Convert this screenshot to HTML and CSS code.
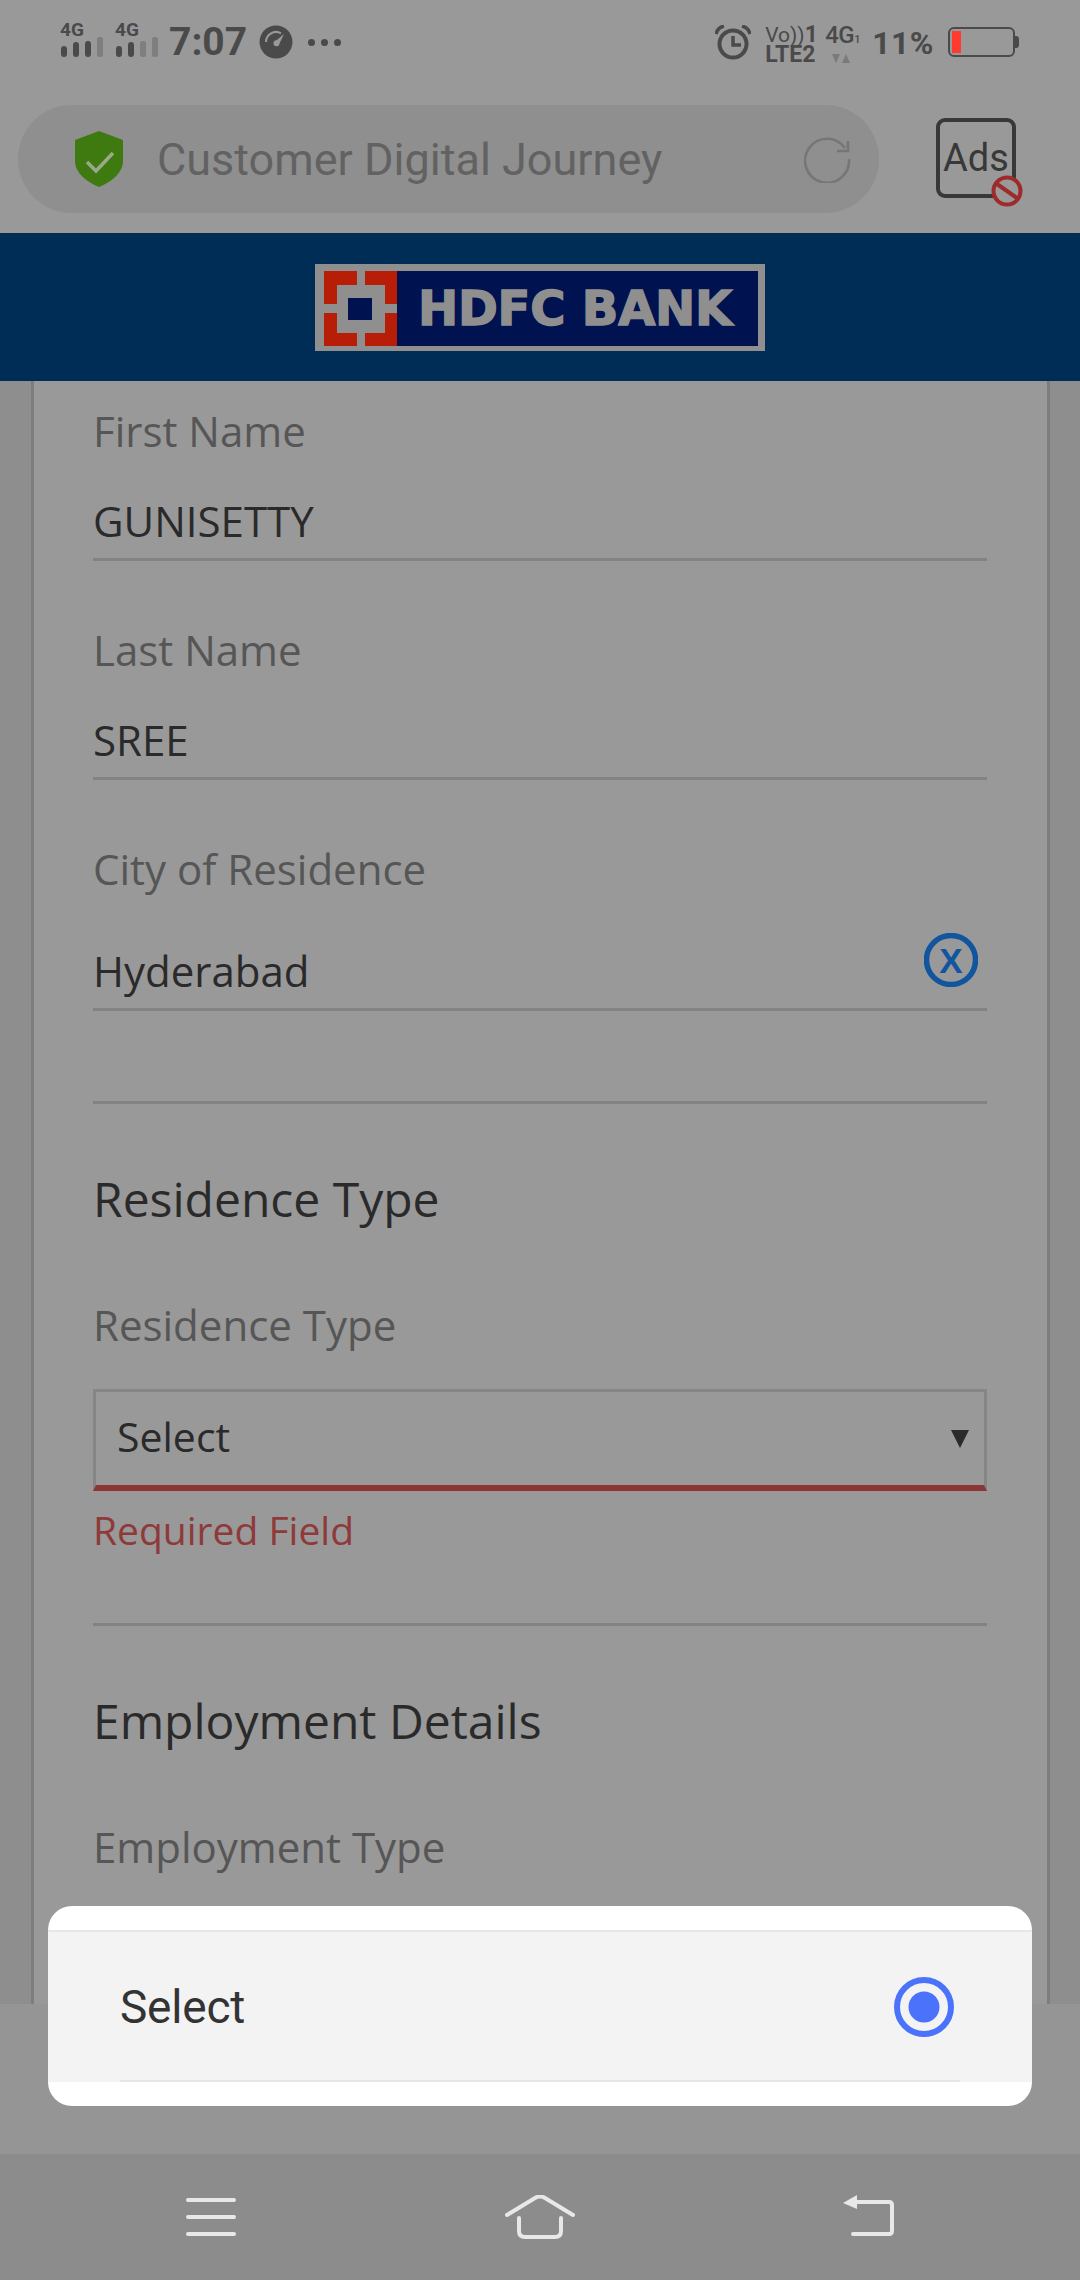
FILE: index.html
```html
<!DOCTYPE html>
<html lang="en">
<head>
    <meta charset="UTF-8">
    <meta name="viewport" content="width=device-width, initial-scale=1.0">
    <title>Customer Digital Journey</title>
    <link rel="stylesheet" href="styles.css">
</head>
<body>

<div class="status-bar">
    <div class="status-left">
        <div class="signal">
            <span>4G</span>
            <svg width="44" height="20" viewBox="0 0 44 20">
                <rect x="1" y="9" width="6" height="11" rx="3" class="bar-on"/>
                <rect x="13" y="5" width="6" height="15" rx="3" class="bar-on"/>
                <rect x="25" y="4" width="6" height="16" rx="3" class="bar-on"/>
                <rect x="37" y="0" width="6" height="20" rx="2" class="bar-off"/>
            </svg>
        </div>
        <div class="signal signal-two">
            <span>4G</span>
            <svg width="44" height="20" viewBox="0 0 44 20">
                <rect x="1" y="9" width="6" height="11" rx="3" class="bar-on"/>
                <rect x="13" y="5" width="6" height="15" rx="3" class="bar-on"/>
                <rect x="25" y="4" width="6" height="16" rx="2" class="bar-off"/>
                <rect x="37" y="0" width="6" height="20" rx="2" class="bar-off"/>
            </svg>
        </div>
        <span class="clock">7:07</span>
        <svg class="gauge" width="34" height="34" viewBox="0 0 34 34">
            <circle cx="17" cy="17" r="16.5" fill="#4a4a4a"/>
            <path d="M7 17a10 10 0 0 1 15-8.6" fill="none" stroke="#999" stroke-width="2.2"/>
            <path d="M25 9l-7.5 6.2a3 3 0 1 0 3 3.2z" fill="#999"/>
        </svg>
        <div class="dots"><i></i><i></i><i></i></div>
    </div>
    <div class="status-right">
        <svg class="alarm" width="36" height="35" viewBox="0 0 36 35">
            <circle cx="18" cy="19" r="13.5" fill="none" stroke="#4a4a4a" stroke-width="4"/>
            <path d="M18 11v9h8" fill="none" stroke="#4a4a4a" stroke-width="3.5"/>
            <path d="M1 9c1-4 4-7 8-8M35 9c-1-4-4-7-8-8" fill="none" stroke="#4a4a4a" stroke-width="3.5"/>
        </svg>
        <div class="volte">
            <span class="volte-top">Vo))<b>1</b></span>
            <span class="volte-bottom">LTE2</span>
        </div>
        <div class="net">
            <span>4G<small>1</small></span>
            <svg width="18" height="9" viewBox="0 0 18 9">
                <path d="M0 0h8l-4 9zM10 9h8l-4-9z" fill="#7a7a7a"/>
            </svg>
        </div>
        <span class="percent">11%</span>
        <div class="battery"><div class="battery-fill"></div></div>
    </div>
</div>

<div class="toolbar">
    <div class="address-pill">
        <svg class="shield" width="48" height="56" viewBox="0 0 48 56">
            <path d="M24 0l24 9v21c0 12-12 21-24 26C12 51 0 42 0 30V9z" fill="#3f7a10"/>
            <path d="M12 31l9 9 17-18" fill="none" stroke="#9aa98c" stroke-width="3.5"/>
        </svg>
        <span class="address-text">Customer Digital Journey</span>
        <svg class="refresh" width="48" height="48" viewBox="0 0 48 48">
            <path d="M41 13a22 22 0 1 0 4 11" fill="none" stroke="#767676" stroke-width="2.6"/>
            <path d="M44 6v10H33" fill="none" stroke="#767676" stroke-width="2.6"/>
        </svg>
    </div>
    <div class="ads-box">
        <span>Ads</span>
        <svg class="no-sign" width="32" height="32" viewBox="0 0 32 32">
            <circle cx="16" cy="16" r="13.5" fill="#999" stroke="#9e2b2b" stroke-width="4"/>
            <path d="M6 9l20 14" stroke="#9e2b2b" stroke-width="4"/>
        </svg>
    </div>
</div>

<header class="bank-header">
    <div class="logo">
        <svg class="logo-mark" width="73" height="75" viewBox="0 0 73 75">
            <rect width="73" height="75" fill="#b81d08"/>
            <rect x="33" width="8" height="75" fill="#8f8f8f"/>
            <rect y="33" width="73" height="9" fill="#8f8f8f"/>
            <rect x="13" y="14" width="48" height="48" fill="#8f8f8f"/>
            <rect x="24" y="27" width="24" height="22" fill="#00124f"/>
        </svg>
        <span class="logo-text">HDFC BANK</span>
    </div>
</header>

<main class="content">
    <div class="card">
        <div class="field">
            <div class="label">First Name</div>
            <div class="value">GUNISETTY</div>
        </div>
        <div class="field">
            <div class="label">Last Name</div>
            <div class="value">SREE</div>
        </div>
        <div class="field field-city">
            <div class="label">City of Residence</div>
            <div class="value">Hyderabad</div>
            <svg class="clear-icon" width="54" height="54" viewBox="0 0 54 54">
                <circle cx="27" cy="27" r="24.5" fill="none" stroke="#12559f" stroke-width="5.5"/>
                <text x="27" y="39.5" text-anchor="middle" class="clear-x">X</text>
            </svg>
        </div>
        <div class="divider"></div>

        <h2 class="section-title">Residence Type</h2>
        <div class="label label-select">Residence Type</div>
        <div class="select-box">
            <span>Select</span>
            <i class="select-arrow"></i>
        </div>
        <div class="error-text">Required Field</div>
        <div class="divider divider-error"></div>

        <h2 class="section-title">Employment Details</h2>
        <div class="label">Employment Type</div>
    </div>
</main>

<div class="bottom-gap"></div>

<nav class="nav-bar">
    <svg width="50" height="41" viewBox="0 0 50 41">
        <path d="M2 5h46M2 22h46M2 39h46" class="nav-stroke"/>
    </svg>
    <svg width="70" height="44" viewBox="0 0 70 44">
        <path d="M2 20L30 3q5-3 10 0l28 17" class="nav-stroke"/>
        <path d="M14 23v13q0 6 6 6h30q6 0 6-6V23" class="nav-stroke"/>
    </svg>
    <svg width="51" height="41" viewBox="0 0 51 41">
        <path d="M0 8l14-8v14z" fill="#e8e8e8"/>
        <path d="M8 7h38q3 0 3 3v26q0 3-3 3H10" class="nav-stroke"/>
    </svg>
</nav>

<div class="dialog">
    <div class="dialog-row">
        <span>Select</span>
        <svg width="60" height="60" viewBox="0 0 60 60">
            <circle cx="30" cy="30" r="27" fill="none" stroke="#4a72fb" stroke-width="6"/>
            <circle cx="30" cy="30" r="15.5" fill="#4a72fb"/>
        </svg>
    </div>
</div>

</body>
</html>
```

FILE: styles.css
```css
* {
    box-sizing: border-box;
}
body {
    margin: 0;
    width: 1080px;
    height: 2280px;
    overflow: hidden;
    position: relative;
    display: flex;
    flex-direction: column;
    font-family: "Open Sans", sans-serif;
    background-color: #999;
}

/* status bar */
.status-bar {
    height: 100px;
    display: flex;
    justify-content: space-between;
    font-family: Roboto, sans-serif;
    color: #4a4a4a;
}
.status-left {
    display: flex;
    padding: 22px 0 0 60px;
}
.signal {
    width: 44px;
    display: flex;
    flex-direction: column;
    font-size: 19px;
    font-weight: 700;
    line-height: 15px;
}
.signal svg {
    display: block;
}
.signal-two {
    margin-left: 11px;
}
.bar-on {
    fill: #4a4a4a;
}
.bar-off {
    fill: #7f7f7f;
}
.clock {
    margin: 0 0 0 10px;
    font-size: 39px;
    font-weight: 700;
    line-height: 40px;
}
.gauge {
    margin: 3px 0 0 12px;
}
.dots {
    display: flex;
    gap: 6px;
    margin: 17px 0 0 15px;
}
.dots i {
    width: 7px;
    height: 7px;
    border-radius: 50%;
    background-color: #4a4a4a;
}
.status-right {
    display: flex;
    padding: 25px 65px 0 0;
}
.alarm {
    margin-right: 14px;
}
.volte {
    width: 52px;
    display: flex;
    flex-direction: column;
}
.volte-top {
    font-size: 21px;
    line-height: 19px;
    white-space: nowrap;
}
.volte-top b {
    font-size: 23px;
}
.volte-bottom {
    font-size: 23px;
    font-weight: 700;
    line-height: 19px;
}
.net {
    width: 34px;
    margin-left: 8px;
    display: flex;
    flex-direction: column;
    font-size: 24px;
    font-weight: 500;
    line-height: 20px;
    letter-spacing: -0.5px;
    white-space: nowrap;
}
.net small {
    font-size: 11px;
}
.net svg {
    margin: 4px 0 0 7px;
}
.percent {
    margin: 0 0 0 13px;
    font-size: 32px;
    font-weight: 700;
    line-height: 36px;
    letter-spacing: 0.5px;
}
.battery {
    position: relative;
    width: 67px;
    height: 30px;
    margin: 2px 0 0 14px;
    padding: 2px;
    border: 2px solid #4a4a4a;
    border-radius: 6px;
}
.battery::after {
    content: "";
    position: absolute;
    right: -6px;
    top: 7px;
    width: 4px;
    height: 12px;
    border-radius: 0 3px 3px 0;
    background-color: #4a4a4a;
}
.battery-fill {
    width: 9px;
    height: 22px;
    background-color: #ff3b30;
}

/* address bar */
.toolbar {
    height: 133px;
    display: flex;
    padding: 5px 0 0 18px;
}
.address-pill {
    width: 861px;
    height: 108px;
    display: flex;
    align-items: center;
    padding-left: 57px;
    border-radius: 54px;
    background-color: #8f8f8f;
}
.shield {
    flex: none;
}
.address-text {
    flex: 1;
    margin-left: 34px;
    font-family: Roboto, sans-serif;
    font-size: 45px;
    color: #626262;
}
.refresh {
    margin-right: 27px;
}
.ads-box {
    position: relative;
    width: 80px;
    height: 80px;
    margin: 13px 0 0 57px;
    display: flex;
    align-items: center;
    justify-content: center;
    border: 4px solid #383838;
    border-radius: 9px;
    font-family: Roboto, sans-serif;
    font-size: 38px;
    color: #383838;
}
.no-sign {
    position: absolute;
    right: -11px;
    bottom: -13px;
}

/* logo */
.bank-header {
    height: 148px;
    padding-top: 31px;
    background-color: #002d56;
}
.logo {
    width: 450px;
    height: 87px;
    margin-left: 315px;
    display: flex;
    padding: 7px;
    padding-left: 9px;
    background-color: #8f8f8f;
}
.logo-mark {
    flex: none;
}
.logo-text {
    flex: 1;
    height: 75px;
    padding-left: 21px;
    background-color: #00124f;
    font-family: "DejaVu Sans", sans-serif;
    font-size: 48px;
    font-weight: 700;
    line-height: 75px;
    letter-spacing: -0.2px;
    color: #8f8f8f;
    -webkit-text-stroke: 1.5px #8f8f8f;
    white-space: nowrap;
}

/* form */
.content {
    height: 1623px;
    padding-left: 31px;
    background-color: #8e8e8e;
    overflow: hidden;
}
.card {
    width: 1019px;
    height: 100%;
    padding: 20px 60px 0 59px;
    border-left: 3px solid #7d7d7d;
    border-right: 3px solid #7d7d7d;
    background-color: #999;
}
.field {
    position: relative;
    margin-bottom: 59px;
    padding-bottom: 7px;
    border-bottom: 3px solid #838383;
}
.label {
    font-size: 42px;
    line-height: 60px;
    color: #565656;
}
.value {
    margin-top: 30px;
    font-size: 42px;
    line-height: 60px;
    color: #2a2a2a;
}
.field-city {
    margin-bottom: 90px;
}
.field-city .value {
    margin-top: 42px;
}
.clear-icon {
    position: absolute;
    right: 9px;
    top: 94px;
}
.clear-x {
    font: 700 35px "Liberation Sans", sans-serif;
    fill: #12559f;
}
.divider {
    height: 3px;
    background-color: #838383;
}
.section-title {
    margin: 62px 0 63px;
    font-size: 48px;
    font-weight: 400;
    line-height: 66px;
    color: #2a2a2a;
}
.label-select {
    margin-bottom: 34px;
}
.select-box {
    height: 102px;
    display: flex;
    align-items: center;
    justify-content: space-between;
    padding: 0 15px 6px 21px;
    border: 3px solid #868686;
    border-bottom: 6px solid #8c3535;
    font-size: 41px;
    color: #2a2a2a;
}
.select-arrow {
    width: 0;
    height: 0;
    margin-top: 6px;
    border-left: 9px solid transparent;
    border-right: 9px solid transparent;
    border-top: 18px solid #2a2a2a;
}
.error-text {
    margin-top: 9px;
    font-size: 39px;
    line-height: 60px;
    color: #8f3a3a;
}
.divider-error {
    margin-top: 63px;
}

.bottom-gap {
    height: 150px;
    background-color: #959595;
}

/* navigation */
.nav-bar {
    height: 126px;
    display: flex;
    justify-content: space-between;
    align-items: flex-start;
    padding: 41px 186px 0;
    background-color: #8c8c8c;
}
.nav-stroke {
    fill: none;
    stroke: #e8e8e8;
    stroke-width: 4;
    stroke-linecap: round;
}

/* dialog */
.dialog {
    position: absolute;
    left: 48px;
    top: 1906px;
    width: 984px;
    height: 200px;
    padding-top: 24px;
    border-radius: 24px;
    background-color: #fff;
}
.dialog-row {
    height: 152px;
    display: flex;
    align-items: center;
    justify-content: space-between;
    padding: 0 78px 0 72px;
    border-top: 2px solid #e6e6e6;
    background-color: #f3f3f3;
    font-family: Roboto, sans-serif;
    font-size: 46px;
    letter-spacing: -0.2px;
    color: #333;
    position: relative;
}
.dialog-row::after {
    content: "";
    position: absolute;
    left: 72px;
    right: 72px;
    bottom: 0;
    height: 2px;
    background-color: #e6e6e6;
}
```
